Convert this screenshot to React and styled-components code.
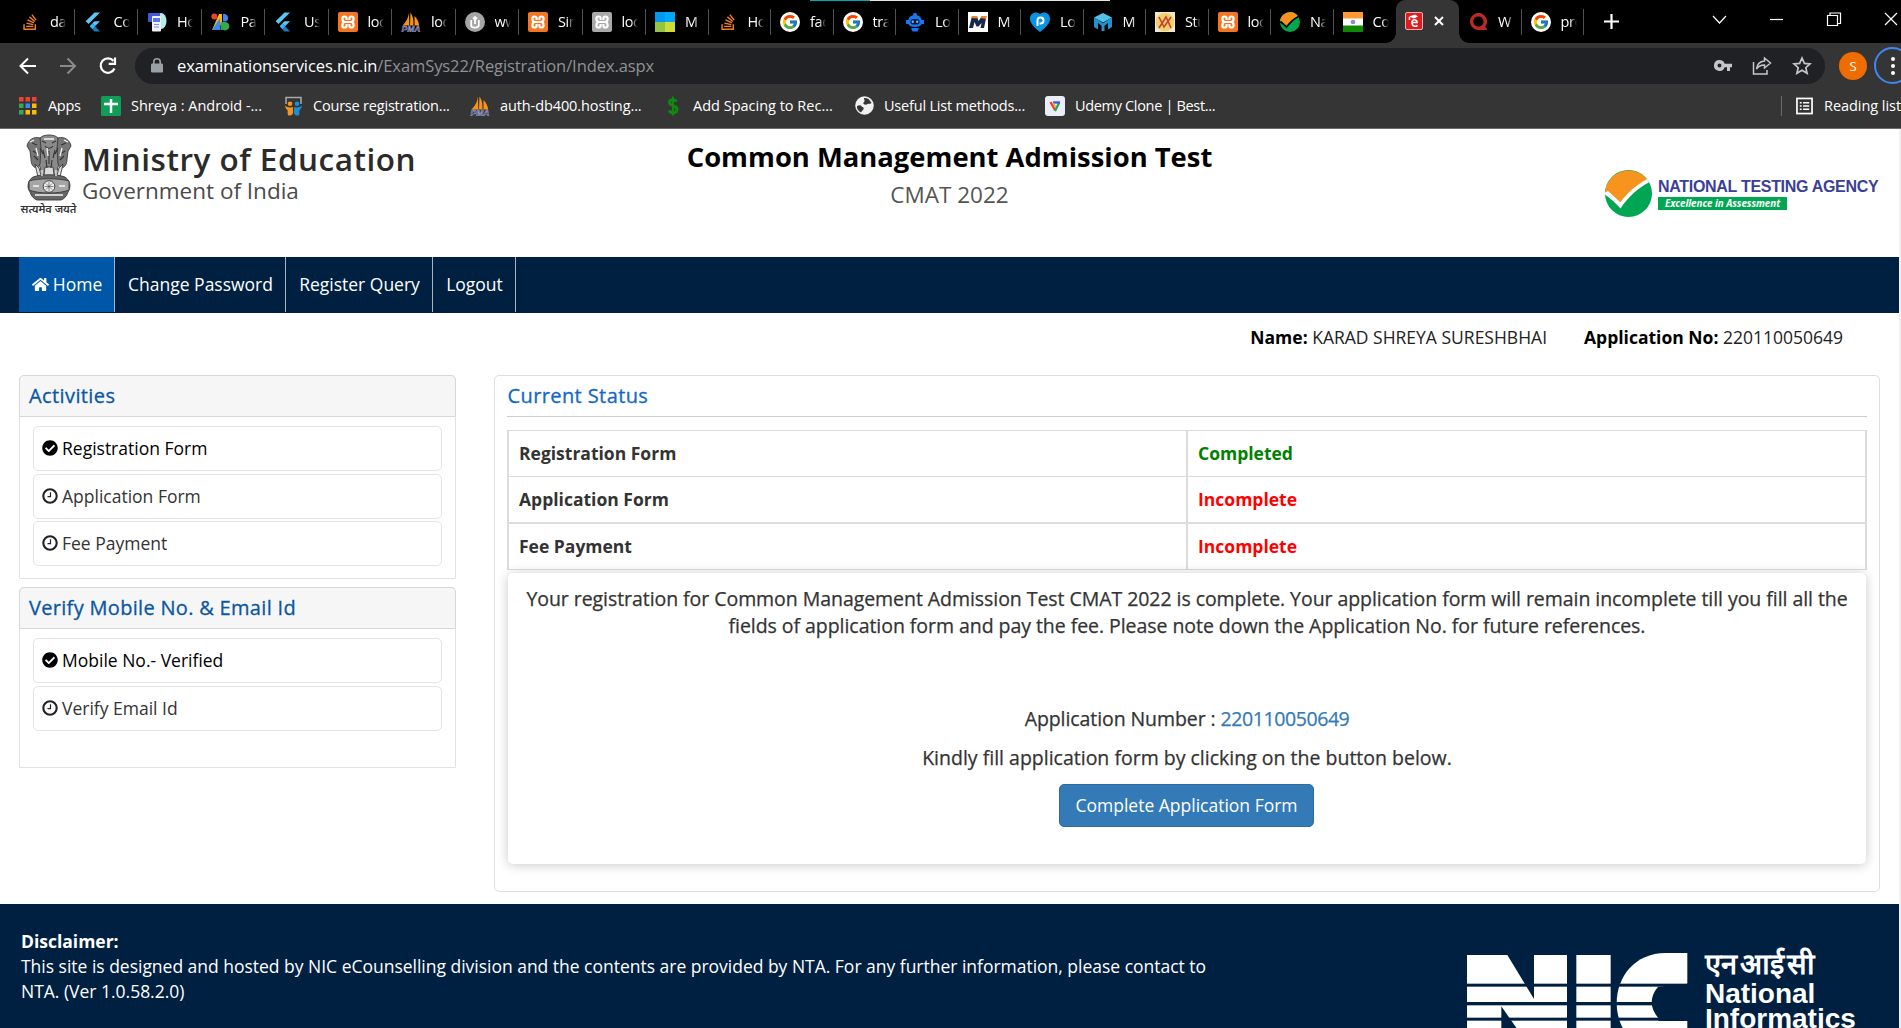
import React from "react";
import styled, { createGlobalStyle, css } from "styled-components";
import { FaStackOverflow, FaHome, FaCheckCircle } from "react-icons/fa";
import { FcGoogle } from "react-icons/fc";
import { SiQuora } from "react-icons/si";

const Global = createGlobalStyle`
  * { box-sizing: border-box; }
  body { margin: 0; background: #fff; overflow: hidden; font-family: "Open Sans", "Noto Sans", sans-serif; }
`;

const Window = styled.div`
  width: 1901px;
  height: 1028px;
  overflow: hidden;
  display: flex;
  flex-direction: column;
`;

/* ---------- browser chrome ---------- */
const TabStrip = styled.div`
  position: relative;
  flex: none;
  height: 43px;
  background: #000;
  display: flex;
  padding-left: 11px;
`;
const LoadLine = styled.div`
  position: absolute;
  top: 0;
  left: 810px;
  width: 300px;
  height: 1px;
  background: linear-gradient(90deg, #00a9b5 0 60px, #e4e4e4 60px);
`;
const Tab = styled.div`
  flex: none;
  width: ${(p) => p.$w}px;
  height: 43px;
  display: flex;
  align-items: center;
  padding-left: 9px;
  position: relative;
  ${(p) =>
    p.$active
      ? css`
          background: #353535;
          border-radius: 9px 9px 0 0;
          gap: 11px;
          padding: 0 0 1px 9px;
          &::before,
          &::after {
            content: "";
            position: absolute;
            bottom: 0;
            width: 10px;
            height: 10px;
          }
          &::before {
            left: -10px;
            background: radial-gradient(circle at 0 0, transparent 9.5px, #353535 10px);
          }
          &::after {
            right: -10px;
            background: radial-gradient(circle at 100% 0, transparent 9.5px, #353535 10px);
          }
        `
      : !p.$bare &&
        css`
          background: linear-gradient(#505050, #505050) right 9px / 1px 26px no-repeat;
        `}
`;
const Favicon = styled.span`
  flex: none;
  width: 20px;
  height: 20px;
  display: flex;
  align-items: center;
  justify-content: center;
  svg { display: block; }
`;
const TabLabel = styled.span`
  margin-left: 10px;
  width: 16px;
  overflow: hidden;
  white-space: nowrap;
  font-size: 14.5px;
  letter-spacing: -0.4px;
  line-height: 20px;
  color: #fff;
  -webkit-mask-image: linear-gradient(90deg, #000 9px, transparent 16px);
`;
const WindowButtons = styled.div`
  flex: 1;
  display: flex;
  align-items: center;
  justify-content: space-between;
  padding: 0 3px 0 20px;
  svg { display: block; }
`;
const Captions = styled.div`
  padding-bottom: 5px;
`;
const Toolbar = styled.div`
  flex: none;
  height: 45px;
  background: #353535;
  display: flex;
  align-items: center;
`;
const NavIcons = styled.div`
  flex: none;
  width: 135px;
  padding-left: 18px;
  display: flex;
  gap: 20px;
  svg { display: block; }
`;
const Omnibox = styled.div`
  flex: none;
  width: 1690px;
  height: 36px;
  margin-top: 1px;
  border-radius: 18px;
  background: #202124;
  display: flex;
  align-items: center;
  padding: 0 13px 1px 16px;
`;
const Url = styled.div`
  margin-left: 14px;
  flex: 1;
  font-size: 16.5px;
  letter-spacing: -0.08px;
  color: #8f9194;
  white-space: nowrap;
  b { font-weight: 400; color: #fff; }
`;
const OmniIcons = styled.div`
  display: flex;
  align-items: center;
  gap: 20px;
  svg { display: block; }
`;
const Avatar = styled.div`
  margin: 0 0 0 14px;
  flex: none;
  width: 28px;
  height: 28px;
  border-radius: 50%;
  background: #ef6c00;
  color: #fff;
  font-size: 13px;
  display: flex;
  align-items: center;
  justify-content: center;
`;
const MenuButton = styled.div`
  margin-left: 7px;
  flex: none;
  width: 37px;
  height: 37px;
  border: 2.5px solid #4285f4;
  border-radius: 50%;
  display: flex;
  flex-direction: column;
  align-items: center;
  justify-content: center;
  gap: 3px;
  i { width: 4px; height: 4px; border-radius: 50%; background: #fff; }
`;
const Bookmarks = styled.div`
  flex: none;
  height: 41px;
  padding: 0 0 5px 18px;
  background: #353535;
  border-bottom: 1px solid #6a6a6a;
  display: flex;
  align-items: center;
`;
const Bookmark = styled.div`
  flex: none;
  width: ${(p) => p.$w}px;
  display: flex;
  align-items: center;
  gap: 10px;
  color: #fff;
  font-size: 14.5px;
  letter-spacing: ${(p) => p.$ls ?? -0.3}px;
  line-height: 20px;
  white-space: nowrap;
`;
const ReadingList = styled(Bookmark)`
  margin-left: auto;
  border-left: 1px solid #6b6b6b;
  padding-left: 14px;
  gap: 11px;
`;

/* ---------- page ---------- */
const Page = styled.div`
  flex: 1;
  min-height: 0;
  border-right: 2px solid #f0f0f0;
  display: flex;
  flex-direction: column;
  background: #fff;
`;
const Header = styled.header`
  flex: none;
  height: 128px;
  display: grid;
  grid-template-columns: 600px 1fr 600px;
`;
const Brand = styled.div`
  display: flex;
  padding: 5px 0 0 19px;
`;
const EmblemBox = styled.div`
  width: 59px;
  display: flex;
  flex-direction: column;
  align-items: center;
`;
const Motto = styled.div`
  font-size: 11px;
  line-height: 14px;
  font-weight: 600;
  color: #333;
  white-space: nowrap;
`;
const BrandText = styled.div`
  margin-left: 4px;
  padding-top: 5px;
  white-space: nowrap;
`;
const Ministry = styled.div`
  font-size: 31.5px;
  line-height: 40px;
  font-weight: 600;
  color: #2b2b2b;
  letter-spacing: 0.5px;
`;
const Government = styled.div`
  font-size: 22.5px;
  line-height: 24px;
  color: #4a4a4a;
`;
const Titles = styled.div`
  text-align: center;
  padding-top: 9px;
  white-space: nowrap;
`;
const Title = styled.div`
  font-size: 27.4px;
  line-height: 38px;
  font-weight: 700;
  color: #000;
`;
const SubTitle = styled.div`
  font-size: 22.5px;
  line-height: 37px;
  color: #555;
`;
const Agency = styled.div`
  display: flex;
  justify-content: flex-end;
  gap: 6px;
  padding: 41px 21px 0 0;
`;
const AgencyName = styled.div`
  margin-top: 6px;
  width: 220px;
  font-family: "Liberation Sans", Arial, sans-serif;
  font-weight: 700;
  font-size: 16px;
  letter-spacing: -0.3px;
  line-height: 21px;
  color: #3b3f96;
  white-space: nowrap;
`;
const AgencyTag = styled.div`
  margin-top: 0;
  width: 129px;
  height: 13px;
  background: #00a651;
  color: #fff;
  font-family: "Open Sans", sans-serif;
  font-size: 9.8px;
  letter-spacing: -0.05px;
  line-height: 13px;
  font-style: italic;
  text-align: center;
`;
const Nav = styled.nav`
  flex: none;
  height: 56px;
  padding: 0 0 1px 19px;
  background: #002042;
  display: flex;
`;
const NavItem = styled.a`
  flex: none;
  width: ${(p) => p.$w}px;
  display: flex;
  align-items: center;
  justify-content: center;
  gap: 4px;
  padding: 0 0 1px 1px;
  border-right: 1px solid #aab4bf;
  background: ${(p) => (p.$active ? "#0057a8" : "transparent")};
  color: #fff;
  font-size: 17.5px;
  white-space: nowrap;
`;
const UserLine = styled.div`
  flex: none;
  height: 62px;
  padding: 12px 56px 0 0;
  display: flex;
  justify-content: flex-end;
  gap: 37px;
  font-size: 17.5px;
  line-height: 25px;
  color: #000;
  white-space: nowrap;
  b { font-weight: 700; }
  span { font-weight: 400; color: #222; }
`;
const Columns = styled.div`
  flex: none;
  height: 529px;
  padding-left: 19px;
  display: flex;
  gap: 38px;
  align-items: flex-start;
`;
const Side = styled.aside`
  width: 437px;
  display: flex;
  flex-direction: column;
  gap: 8px;
`;
const Panel = styled.section`
  height: ${(p) => p.$h}px;
  border: 1px solid #e2e2e2;
  border-radius: 5px 5px 0 0;
`;
const heading = css`
  font-size: 20px;
  line-height: 40px;
  font-weight: 500;
  letter-spacing: ${(p) => p.$ls ?? 0.4}px;
  -webkit-text-stroke: 0.3px currentColor;
`;
const PanelHead = styled.h3`
  margin: -1px -1px 0;
  height: 42px;
  padding: 0 9px;
  border: 1px solid #d7d7d7;
  border-radius: 5px 5px 0 0;
  background: #f6f6f6;
  color: #0b57a4;
  ${heading}
`;
const List = styled.div`
  padding: 9px 13px 0;
  display: flex;
  flex-direction: column;
  gap: 2.5px;
`;
const Item = styled.div`
  height: 45px;
  border: 1px solid #e4e4e4;
  border-radius: 5px;
  padding: 0 8px 1px;
  display: flex;
  align-items: center;
  gap: 4px;
  font-size: 17.5px;
  color: ${(p) => (p.$done ? "#000" : "#333")};
  svg { display: block; flex: none; color: ${(p) => (p.$done ? "#000" : "#222")}; }
`;
const Main = styled.main`
  width: 1386px;
  height: 517px;
  border: 1px solid #dedede;
  border-radius: 5px;
  padding: 0 12px;
`;
const StatusHead = styled.h3`
  margin: 0 0 13px;
  height: 41px;
  border-bottom: 1px solid #ccc;
  padding-left: 0.5px;
  color: #1268c6;
  ${heading}
`;
const Table = styled.div`
  border: solid #dcdcdc;
  border-width: 1px 2px;
  height: 140px;
`;
const Row = styled.div`
  display: grid;
  grid-template-columns: 677px 1fr;
  height: ${(p) => p.$h}px;
  border-top: ${(p) => p.$line}px solid #dcdcdc;
  font-size: 17.5px;
  font-weight: 700;
`;
const Cell = styled.div`
  padding: 0 10px 2px;
  display: flex;
  align-items: center;
  color: ${(p) => p.$color ?? "#333"};
  & + & { border-left: 2px solid #dcdcdc; }
`;
const Notice = styled.div`
  margin: 3px 1px 0;
  height: 291px;
  border-radius: 5px;
  background: #fff;
  position: relative;
  box-shadow: 0 1px 12px rgba(0, 0, 0, 0.22);
  padding: 12px 0 0;
  display: flex;
  flex-direction: column;
  align-items: center;
  color: #333;
  font-size: 19.5px;
  line-height: 27px;
  text-align: center;
  -webkit-text-stroke: 0.25px currentColor;
`;
const Para = styled.div`
  letter-spacing: ${(p) => p.$ls ?? 0}px;
  white-space: nowrap;
  margin-bottom: ${(p) => p.$mb ?? 0}px;
  a { color: #337ab7; letter-spacing: -0.42px; }
`;
const Button = styled.button`
  width: 255px;
  height: 43px;
  padding: 0 0 1px;
  border: 1px solid #2e6da4;
  border-radius: 5px;
  background: #337ab7;
  color: #fff;
  font: 400 17.5px "Open Sans", sans-serif;
  -webkit-text-stroke: 0;
  margin-right: 1px;
`;
const Footer = styled.footer`
  flex: 1;
  min-height: 0;
  background: #002042;
  color: #fff;
  display: flex;
  justify-content: space-between;
  padding: 25px 0 0 21px;
  font-size: 17.5px;
  letter-spacing: -0.015px;
  line-height: 25px;
  white-space: nowrap;
  b { font-weight: 700; }
`;
const Nic = styled.div`
  width: 432px;
  display: flex;
  gap: 17px;
  padding-top: 24px;
  svg { display: block; flex: none; }
`;
const NicText = styled.div`
  margin-top: -7px;
  font-family: "Liberation Sans", Arial, sans-serif;
  font-weight: 700;
  font-size: 28px;
  line-height: 24.5px;
`;
const NicHindi = styled.div`
  font-size: 29px;
  line-height: 36px;
  height: 36px;
  word-spacing: -5px;
`;

/* ---------- icons ---------- */
const Xampp = ({ gray }) => (
  <svg width="20" height="20" viewBox="0 0 20 20">
    <rect width="20" height="20" rx="2" fill={gray ? "#a9a9a9" : "#f37623"} />
    <path
      d="M8.600 8V6.600a2.100 2.100 0 0 0-4.200 0c0 2 .9 3.400 2.600 3.400h6c1.700 0 2.600-1.400 2.600-3.400a2.100 2.100 0 0 0-4.200 0V8M8.600 12v1.400a2.100 2.100 0 0 1-4.200 0c0-2 .9-3.400 2.600-3.400h6c1.700 0 2.600 1.400 2.600 3.400a2.100 2.100 0 0 1-4.200 0V12"
      fill="none"
      stroke="#fff"
      strokeWidth="2.200"
    />
  </svg>
);
const Stack = () => <FaStackOverflow size={18} color="#f48024" />;
const Flutter = () => (
  <svg width="20" height="20" viewBox="0 0 20 20">
    <path d="M10.500 0.500H16L4.500 12 1.700 9.200z" fill="#5cc8f8" />
    <path d="M10.500 9.200H16l-5 5-2.700-2.600z" fill="#5cc8f8" />
    <path d="M5.700 14.200l2.800-2.800 7.500 8.100h-5.500z" fill="#1c76c0" />
    <path d="M5.700 14.200l2.700-2.700 2.700 2.700-2.700 2.700z" fill="#39b5f0" />
  </svg>
);
const Pma = () => (
  <svg width="20" height="20" viewBox="0 0 20 20">
    <path d="M8 0.500C7.500 6 5 10 1.500 13.500h6.800zM9.500 0.500c2.800 4 3.300 8.500 2.800 13H9zM13.500 4c2.500 2.500 4.500 6 4.700 9.500h-4.700z" fill="#f7941d" />
    <text x="10" y="19.500" textAnchor="middle" fontFamily="Liberation Sans" fontStyle="italic" fontWeight="700" fontSize="8.500" letterSpacing="0" fill="#343c78" stroke="#c3c6e0" strokeWidth=".4">PMA</text>
  </svg>
);
const Doc = () => (
  <svg width="20" height="20" viewBox="0 0 20 20">
    <ellipse cx="14" cy="9" rx="5.500" ry="8" fill="#b8ecec" />
    <rect x="1" y="1" width="12" height="9" rx="1" fill="#3d5bd8" />
    <rect x="5" y="4" width="9" height="15.500" rx="1" fill="#f1f2fb" />
    <rect x="6" y="6" width="7" height="4" fill="#5a76e8" />
    <path d="M7 12.500h5M7 15h5" stroke="#7c8fe5" />
  </svg>
);
const Pollen = () => (
  <svg width="20" height="20" viewBox="0 0 20 20">
    <circle cx="3.300" cy="4.500" r="3" fill="#ea4335" />
    <path d="M8 2h3v9L6 18H1z" fill="#fbbc05" />
    <path d="M1 18l8-12v12z" fill="#4285f4" />
    <path d="M12 2h2a4 4 0 0 1 1 7.500h-3z" fill="#4285f4" />
    <path d="M9.500 10H14a4.200 4.200 0 1 1-2 7.800L9.500 18z" fill="#34a853" />
  </svg>
);
const UCircle = () => (
  <svg width="20" height="20" viewBox="0 0 20 20">
    <circle cx="10" cy="10" r="10" fill="#a5a5a5" />
    <path d="M6.200 8v5.200c0 3.200 7.600 3.200 7.600 0V8M10 12V5.500M8 7l2-2 2 2" fill="none" stroke="#fff" strokeWidth="1.800" />
  </svg>
);
const Squares = () => (
  <svg width="20" height="20" viewBox="0 0 20 20">
    <rect width="10" height="10" fill="#0099f0" />
    <rect x="10" width="10" height="10" fill="#00a8fa" />
    <rect y="10" width="10" height="10" fill="#93c545" />
    <rect x="10" y="10" width="10" height="10" fill="#cddc39" />
  </svg>
);
const Google = () => (
  <svg width="20" height="20" viewBox="0 0 20 20">
    <circle cx="10" cy="10" r="10" fill="#fff" />
    <g transform="translate(1.500 1.500)"><FcGoogle size={17} /></g>
  </svg>
);
const Robot = () => (
  <svg width="20" height="20" viewBox="0 0 20 20">
    <circle cx="10" cy="2.500" r="1.800" fill="#1877f2" />
    <path d="M10 3c4 0 6.500 2.500 6.500 5H19v4h-2.500c-.5 2-3 3-6.500 3s-6-1-6.500-3H1V8h2.500C3.500 5.500 6 3 10 3zM6 16h8l-1.500 3.500h-5z" fill="#1877f2" />
    <rect x="5.500" y="7" width="9" height="5.500" rx="2.500" fill="#051c3c" />
    <circle cx="7.800" cy="9.700" r="1.200" fill="#6cb0ff" />
    <circle cx="12.200" cy="9.700" r="1.200" fill="#6cb0ff" />
  </svg>
);
const Mbox = () => (
  <svg width="20" height="20" viewBox="0 0 20 20">
    <rect width="20" height="20" fill="#fff" />
    <path d="M1 16L4 4h5l1.500 5L14 4h4.500L16 16h-3.500l1-5-3 3.500h-2L6.500 10 5 16z" fill="#17284f" />
    <path d="M3.500 6L4 4h5l.8 2.500zM12.500 6L14 4h4.500l-.5 3z" fill="#f58220" />
  </svg>
);
const Heart = () => (
  <svg width="20" height="20" viewBox="0 0 20 20">
    <path d="M10 20C4 15.500 0 11 0 6.500 0 1 6-1.500 10 2c4-3.500 10-1 10 4.500C20 11 16 15.500 10 20z" fill="#0a93e0" />
    <path d="M7.500 14V8.500a3 3 0 1 1 3 3H9.500" fill="none" stroke="#fff" strokeWidth="2" />
  </svg>
);
const Hex = () => (
  <svg width="20" height="20" viewBox="0 0 20 20">
    <path d="M10 1l9 4.500-9 5-9-5z" fill="#55c0ea" />
    <path d="M1 5.500l4 2.200v0l5 3.600 5-3.600 4-2.200V15l-4 2.500V11l-3.500 2.800V19h-3v-5.200L5 11v6.500L1 15z" fill="#2391cc" />
  </svg>
);
const Crest = () => (
  <svg width="20" height="20" viewBox="0 0 20 20">
    <rect width="20" height="20" fill="#efe6d2" />
    <circle cx="10" cy="10" r="9.300" fill="#f1d06c" />
    <path d="M4 16L11 5l5 11M16 5L9 15 4 5" fill="none" stroke="#c9402f" strokeWidth="1.600" />
  </svg>
);
const Check = ({ size = 20, edge = "#000" }) => (
  <svg width={size} height={size} viewBox="0 0 47 47">
    <circle cx="23.500" cy="23.500" r="23.500" fill="#00a651" />
    <path d="M0 23.500A23.500 23.500 0 0 1 42 9.500L15.500 33 3 22z" fill="#f7941e" />
    <path d="M0 22.500L3 21l12.300 11.300C22 23 31 15 42 9.200l2.200 3C33 18 23 27 15.500 38.500 10.500 33 5 28 0 24.500z" fill={edge} />
  </svg>
);
const Flag = () => (
  <svg width="20" height="20" viewBox="0 0 20 20">
    <rect width="20" height="20" fill="#fff" />
    <rect width="20" height="6.500" fill="#ff9933" />
    <rect y="13.500" width="20" height="6.500" fill="#128807" />
    <circle cx="10" cy="10" r="2.300" fill="#8b8bd0" />
  </svg>
);
const RedE = () => (
  <svg width="18" height="18" viewBox="0 0 18 18">
    <rect x=".5" y=".5" width="17" height="17" rx="1.500" fill="#e31a1c" stroke="#eab0b0" />
    <path d="M4 4.500l6-2 3 2-4 2z" fill="#fff" />
    <path d="M7 10.500h5c0-3.600-5-3.600-5 0 0 4.200 3.500 4.500 5.500 2.800M4.500 5v3" fill="none" stroke="#fff" strokeWidth="1.600" />
  </svg>
);
const Apps = () => (
  <svg width="18" height="18" viewBox="0 0 18 18">
    {["#ea4335", "#ea4335", "#ea4335", "#34a853", "#4285f4", "#fbbc05", "#34a853", "#fbbc05", "#fbbc05"].map((c, i) => (
      <rect key={i} x={(i % 3) * 6.5} y={Math.floor(i / 3) * 6.5} width="4.500" height="4.500" fill={c} />
    ))}
  </svg>
);
const Sheet = () => (
  <svg width="20" height="20" viewBox="0 0 20 20">
    <rect width="20" height="20" rx="1.500" fill="#0f9d58" />
    <path d="M10 3v14M3 8h14" stroke="#fff" strokeWidth="2.500" />
  </svg>
);
const People = () => (
  <svg width="19" height="20" viewBox="0 0 19 20">
    <path d="M2 8V1.500h15V8" fill="none" stroke="#aaa" strokeWidth="1.500" />
    <circle cx="6" cy="7.800" r="2.300" fill="#f7941e" />
    <circle cx="13" cy="7.800" r="2.300" fill="#1b8fd6" />
    <path d="M1 9.500c2 2 4 2 8 1.800V17c-1 3-4 3-5 2-.8-2 0-3.500-.5-5C2 13 1.300 11.500 1 9.500z" fill="#f7941e" />
    <path d="M18 9.500c-2 2-4 2-8 1.800V17c1 3 4 3 5 2 .8-2 0-3.500.5-5 1.500-1 2.200-2.500 2.500-4.500z" fill="#1b8fd6" />
  </svg>
);
const Dollar = () => (
  <svg width="20" height="20" viewBox="0 0 20 20">
    <path d="M13.500 5.500C12 3 6.500 3 6.500 6.500c0 3.500 7.500 3 7.500 7 0 4-6.500 4-8 1" fill="none" stroke="#0f8a0f" strokeWidth="3" />
    <path d="M10 0.500v19" stroke="#0f8a0f" strokeWidth="2" />
  </svg>
);
const Globe = () => (
  <svg width="19" height="19" viewBox="0 0 19 19">
    <circle cx="9.500" cy="9.500" r="9.300" fill="#f1f1f1" />
    <path d="M2 10c3-1 4-1 5 1 2 0 2.500 2 0 4l-1 1.500C3 15 1.500 12 2 10zM9 2c3-.5 6 1.500 7.500 5-2 1.500-3 0-4.500 1.500C10 9 7 8 9 6c1.500-1 0-2 0-4z" fill="#353535" />
  </svg>
);
const Vee = () => (
  <svg width="20" height="20" viewBox="0 0 20 20">
    <rect width="20" height="20" rx="3" fill="#e9eef9" />
    <path d="M5.500 6l4.500 8" stroke="#e8442e" strokeWidth="2.300" />
    <path d="M10 15l4-8" stroke="#23a455" strokeWidth="2.300" />
    <path d="M8 6.500h7" stroke="#3b55e6" strokeWidth="2.300" />
    <path d="M8.500 7l2 4" stroke="#f5a623" strokeWidth="1.500" />
  </svg>
);
const Clock = () => (
  <svg width="16" height="16" viewBox="0 0 16 16" fill="none" stroke="currentColor">
    <circle cx="8" cy="8" r="6.700" strokeWidth="2.100" />
    <path d="M8.500 4.200v4.400H5.500" strokeWidth="1.200" />
  </svg>
);
const Emblem = () => (
  <svg width="46" height="68" viewBox="0 0 46 68">
    <g fill="#8a8a8a" stroke="#3a3a3a" strokeWidth=".9">
      <path d="M14 4c3-4 15-4 18 0l1 9c2 8 2 15-1 20l-2 8H16l-2-8c-3-5-3-12-1-20z" />
      <path d="M14 4C8 2 2 6 1 12l3 5 1 8c0 6 3 9 6 9l3-4 1-16zM32 4c6-2 12 2 13 8l-3 5-1 8c0 6-3 9-6 9l-3-4-1-16z" fill="#777" />
      <path d="M9 30l3 13h22l3-13-4 4-2 7h-3l-1-8h-8l-1 8h-3l-2-7z" fill="#ddd" />
      <path d="M7 43c-6 4-6 11-3 15 1 4 4 7 7 8h24c3-1 6-4 7-8 3-4 3-11-3-15-8-3-24-3-32 0z" fill="#666" />
      <path d="M3 47c10-3 30-3 40 0v9c-9 4-31 4-40 0z" fill="#a5a5a5" />
      <circle cx="23" cy="52.500" r="5.800" fill="#ececec" />
    </g>
    <path d="M16 7l4 2M30 7l-4 2M19 12c2 3 6 3 8 0M17 16l2 8M29 16l-2 8M23 17v13M20 26l1 8M26 26l-1 8M6 9l5 2M40 9l-5 2M7 17l5 3M39 17l-5 3M8 22l4 4M38 22l-4 4M14 14l3 6M32 14l-3 6" stroke="#333" strokeWidth="1.100" fill="none" />
    <path d="M18 5h10M4 8l4-2M42 8l-4-2M7 52h6M33 52h6M16 36v6M30 36v6M9 61h28M10 14l2 8M36 14l-2 8M21 14l1 8" stroke="#f3f3f3" strokeWidth="1.300" fill="none" />
    <path d="M23 48v9M18.500 52.500h9M20 49.500l6 6M26 49.500l-6 6" stroke="#444" strokeWidth=".6" />
  </svg>
);
const NicMark = () => (
  <svg width="221" height="100" viewBox="0 0 663 300">
    <g fill="#fff" transform="translate(-202 -190)">
      <path d="M202 196h121l80 132V196h99v294h-99L305 350v140H202z" />
      <path d="M530 196h103v294H530z" />
      <path d="M863 190h-65C705 190 651 262 651 340s54 150 147 150h65z" />
    </g>
    <path d="M663 92v112h-80q-14 0-10-10-38-46 0-93z" fill="#002042" />
    <g fill="#002042">
      <rect y="92" width="663" height="9" />
      <rect y="147" width="663" height="10" />
      <rect y="194" width="663" height="9" />
    </g>
  </svg>
);

const TABS = [
  [<Stack />, "dat"], [<Flutter />, "Co"], [<Doc />, "Ho"], [<Pollen />, "Pat"], [<Flutter />, "Use"],
  [<Xampp />, "loc"], [<Pma />, "loc"], [<UCircle />, "ww"], [<Xampp />, "Sim"], [<Xampp gray />, "loc"],
  [<Squares />, "M"], [<Stack />, "Ho"], [<Google />, "fac"], [<Google />, "tra"], [<Robot />, "Lo"],
  [<Mbox />, "M"], [<Heart />, "Lo"], [<Hex />, "M"], [<Crest />, "Stu"], [<Xampp />, "loc"],
  [<Check />, "Na"], [<Flag />, "Co"], null, [<SiQuora size={17} color="#b92b27" />, "W"], [<Google />, "pro"],
];

const BOOKMARKS = [
  [<Apps />, "Apps", 83, -0.3],
  [<Sheet />, "Shreya : Android -...", 182, -0.03],
  [<People />, "Course registration...", 187, -0.2],
  [<Pma />, "auth-db400.hosting...", 193, -0.1],
  [<Dollar />, "Add Spacing to Rec...", 191, 0],
  [<Globe />, "Useful List methods...", 191, -0.2],
  [<Vee />, "Udemy Clone | Best...", 190, -0.33],
];

export default function App() {
  return (
    <Window>
      <Global />
      <TabStrip>
        <LoadLine />
        {TABS.map((t, i) =>
          t ? (
            <Tab key={i} $w={i < 10 ? 63.5 : 62.5} $bare={i === 21}>
              <Favicon>{t[0]}</Favicon>
              <TabLabel>{t[1]}</TabLabel>
            </Tab>
          ) : (
            <Tab key={i} $w={63} $active>
              <RedE />
              <svg width="10" height="10" viewBox="0 0 10 10"><path d="M1 1l8 8M9 1L1 9" stroke="#fff" strokeWidth="2" /></svg>
            </Tab>
          )
        )}
        <WindowButtons>
          <svg width="15" height="15" viewBox="0 0 15 15"><path d="M7.500 0v15M0 7.500h15" stroke="#fff" strokeWidth="2.200" /></svg>
          <Captions>
            <svg width="250" height="20" viewBox="0 0 250 20" fill="none" stroke="#fff" strokeWidth="1.200">
              <path d="M65 7l6.500 7L78 7" />
              <path d="M122 10.500h13" />
              <path d="M179.500 6.500h10v10h-10zM182 6V4h10.500v10.500H190" />
              <path d="M237 4l12 12M249 4l-12 12" />
            </svg>
          </Captions>
        </WindowButtons>
      </TabStrip>
      <Toolbar>
        <NavIcons>
          <svg width="20" height="20" viewBox="0 0 20 20" fill="none" stroke="#fff" strokeWidth="2"><path d="M18 10H3M10 2.500L2.500 10l7.500 7.500" /></svg>
          <svg width="20" height="20" viewBox="0 0 20 20" fill="none" stroke="#8a8a8a" strokeWidth="2"><path d="M2 10h15M9.500 2.500L17 10l-7.500 7.500" /></svg>
          <svg width="20" height="20" viewBox="0 0 20 20" fill="none" stroke="#fff" strokeWidth="2.200"><path d="M16.500 12.500A7.200 7.200 0 1 1 15.500 5M17 1.500v6.300h-6.300" /></svg>
        </NavIcons>
        <Omnibox>
          <svg width="12" height="15" viewBox="0 0 12 15"><rect y="5.500" width="12" height="9" rx="1.200" fill="#9aa0a6" /><path d="M2.800 6V4a3.200 3.200 0 0 1 6.400 0v2" fill="none" stroke="#9aa0a6" strokeWidth="1.600" /></svg>
          <Url><b>examinationservices.nic.in</b>/ExamSys22/Registration/Index.aspx</Url>
          <OmniIcons>
            <svg width="18" height="11" viewBox="0 0 18 11"><path d="M5.500 0a5.500 5.500 0 1 0 5.200 7.300H13V11h3V7.300h2V3.700h-7.300A5.500 5.500 0 0 0 5.500 0zm0 3.500a2 2 0 1 1 0 4 2 2 0 0 1 0-4z" fill="#c5c6c8" /></svg>
            <svg width="20" height="19" viewBox="0 0 20 19" fill="none" stroke="#c5c6c8" strokeWidth="1.500"><path d="M1.500 6v12H15v-4" /><path d="M12.500 2l6 5-6 5V9C9 9 6.500 10 4.500 13c.5-4.500 3-7.500 8-8z" /></svg>
            <svg width="20" height="19" viewBox="0 0 20 19"><path d="M10 2l2.400 5.400 5.600.5-4.200 3.800 1.300 5.600L10 14.300l-5.100 3 1.300-5.600L2 7.900l5.600-.5z" fill="none" stroke="#c5c6c8" strokeWidth="1.700" /></svg>
          </OmniIcons>
        </Omnibox>
        <Avatar>S</Avatar>
        <MenuButton><i /><i /><i /></MenuButton>
      </Toolbar>
      <Bookmarks>
        {BOOKMARKS.map(([icon, label, w, ls]) => (
          <Bookmark key={label} $w={w} $ls={ls}><Favicon>{icon}</Favicon>{label}</Bookmark>
        ))}
        <ReadingList $w={120} $ls={-0.05}>
          <svg width="18" height="18" viewBox="0 0 18 18" fill="none" stroke="#fff"><rect x="1" y="1" width="16" height="16" strokeWidth="1.800" /><path d="M4 5.500h2M4 9h2M4 12.500h2M7.500 5.500H14M7.500 9H14M7.500 12.500H14" strokeWidth="1.600" /></svg>
          Reading list
        </ReadingList>
      </Bookmarks>

      <Page>
        <Header>
          <Brand>
            <EmblemBox>
              <Emblem />
              <Motto>सत्यमेव जयते</Motto>
            </EmblemBox>
            <BrandText>
              <Ministry>Ministry of Education</Ministry>
              <Government>Government of India</Government>
            </BrandText>
          </Brand>
          <Titles>
            <Title>Common Management Admission Test</Title>
            <SubTitle>CMAT 2022</SubTitle>
          </Titles>
          <Agency>
            <Check size={47} edge="#fff" />
            <AgencyName>
              NATIONAL TESTING AGENCY
              <AgencyTag>Excellence in Assessment</AgencyTag>
            </AgencyName>
          </Agency>
        </Header>
        <Nav>
          <NavItem $w={96} $active><FaHome size={17} />Home</NavItem>
          <NavItem $w={171}>Change Password</NavItem>
          <NavItem $w={147}>Register Query</NavItem>
          <NavItem $w={83}>Logout</NavItem>
        </Nav>
        <UserLine>
          <div><b>Name:</b> <span>KARAD SHREYA SURESHBHAI</span></div>
          <div><b>Application No:</b> <span>220110050649</span></div>
        </UserLine>
        <Columns>
          <Side>
            <Panel $h={204}>
              <PanelHead>Activities</PanelHead>
              <List>
                <Item $done><FaCheckCircle size={16} />Registration Form</Item>
                <Item><Clock />Application Form</Item>
                <Item><Clock />Fee Payment</Item>
              </List>
            </Panel>
            <Panel $h={181}>
              <PanelHead $ls={0.31}>Verify Mobile No. &amp; Email Id</PanelHead>
              <List>
                <Item $done><FaCheckCircle size={16} />Mobile No.- Verified</Item>
                <Item><Clock />Verify Email Id</Item>
              </List>
            </Panel>
          </Side>
          <Main>
            <StatusHead>Current Status</StatusHead>
            <Table>
              <Row $h={45} $line={0}><Cell>Registration Form</Cell><Cell $color="#008000">Completed</Cell></Row>
              <Row $h={46} $line={1}><Cell>Application Form</Cell><Cell $color="#f00">Incomplete</Cell></Row>
              <Row $h={47} $line={2}><Cell>Fee Payment</Cell><Cell $color="#f00">Incomplete</Cell></Row>
            </Table>
            <Notice>
              <Para $ls={-0.055}>Your registration for Common Management Admission Test CMAT 2022 is complete. Your application form will remain incomplete till you fill all the</Para>
              <Para $ls={-0.05} $mb={66}>fields of application form and pay the fee. Please note down the Application No. for future references.</Para>
              <Para $ls={-0.08} $mb={12}>Application Number : <a>220110050649</a></Para>
              <Para $mb={13}>Kindly fill application form by clicking on the button below.</Para>
              <Button>Complete Application Form</Button>
            </Notice>
          </Main>
        </Columns>
        <Footer>
          <div>
            <b>Disclaimer:</b><br />
            This site is designed and hosted by NIC eCounselling division and the contents are provided by NTA. For any further information, please contact to<br />
            NTA. (Ver 1.0.58.2.0)
          </div>
          <Nic>
            <NicMark />
            <NicText>
              <NicHindi>एन आई सी</NicHindi>
              National<br />Informatics
            </NicText>
          </Nic>
        </Footer>
      </Page>
    </Window>
  );
}
